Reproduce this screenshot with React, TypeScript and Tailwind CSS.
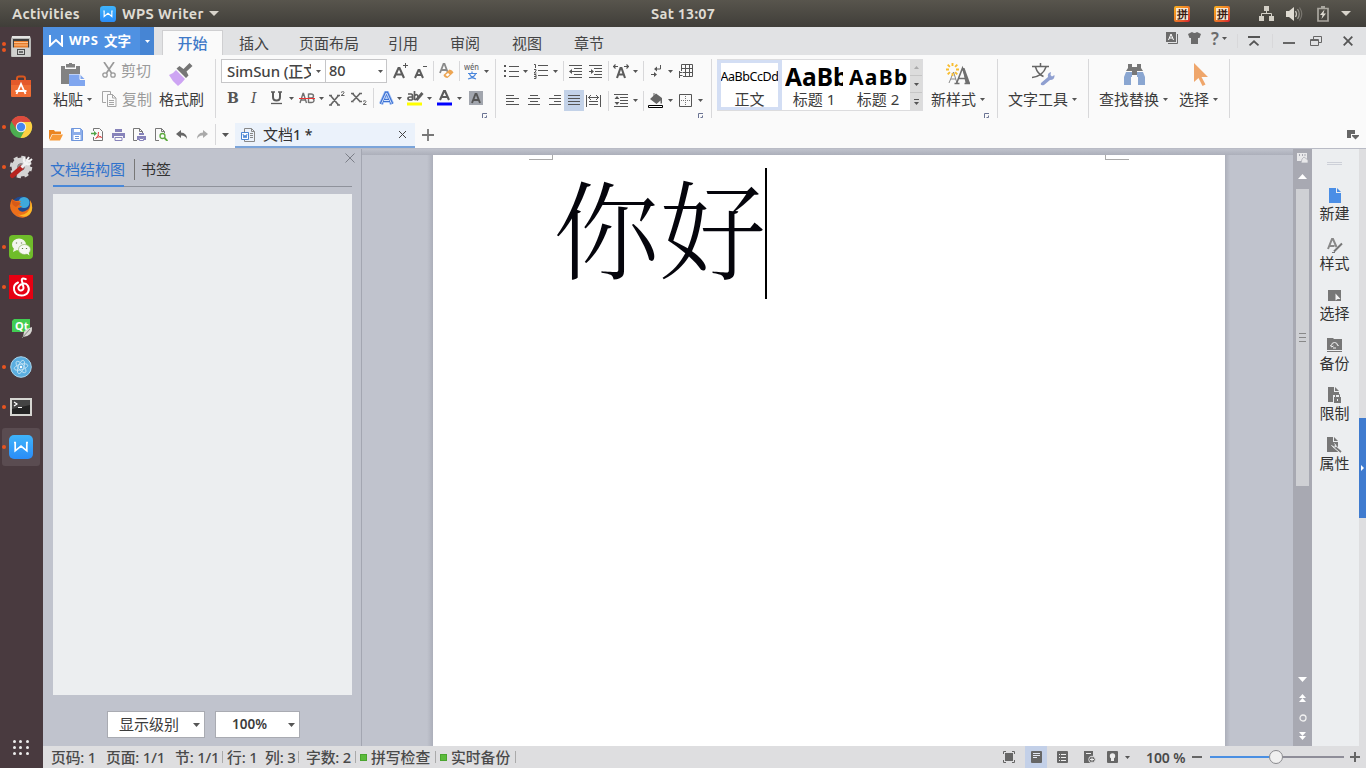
import React from "react";

type IcProps = { c?: string; w: number; h: number; children: React.ReactNode };

function Ic({ c = "", w, h, children }: IcProps) {
  return (
    <svg className={`block shrink-0 ${c}`} width={w} height={h} viewBox={`0 0 ${w} ${h}`} fill="none">
      {children}
    </svg>
  );
}

function Arrow({ c = "", color = "#555" }: { c?: string; color?: string }) {
  return (
    <Ic c={c} w={5} h={3}>
      <path d="M0 0h5L2.500 3z" fill={color} />
    </Ic>
  );
}

function Sep({ c = "" }: { c?: string }) {
  return <div className={`w-px shrink-0 bg-[#d8d8da] ${c}`} />;
}

function Launcher({ c = "" }: { c?: string }) {
  return (
    <Ic c={c} w={5} h={5}>
      <path d="M.5 5V.5H5" stroke="#6a7393" />
      <path d="M2.500 4.500h2v-2" stroke="#6a7393" />
    </Ic>
  );
}

function Lines({ c = "", w, rows }: { c?: string; w: number; rows: [number, number][] }) {
  return (
    <Ic c={c} w={w} h={rows.length * 3 - 1}>
      {rows.map(([x, len], i) => (
        <path key={i} d={`M${x} ${i * 3 + 0.5}h${len}`} stroke="#555" />
      ))}
    </Ic>
  );
}

/* ---------- top panel ---------- */

function WpsLogo({ s }: { s: number }) {
  return (
    <svg className="block shrink-0" width={s} height={s} viewBox="0 0 24 24" fill="none">
      <defs>
        <linearGradient id="wpsg" x1="0" y1="0" x2="0" y2="1">
          <stop offset="0" stopColor="#3fb4fb" />
          <stop offset="1" stopColor="#2a8cf7" />
        </linearGradient>
      </defs>
      <rect width="24" height="24" rx="5" fill="url(#wpsg)" />
      <path d="M5 7.500h1.200v8.300L12 11l5.800 4.800V7.500H19" stroke="#fff" strokeWidth="1.700" />
    </svg>
  );
}

function PinIcon({ c }: { c: string }) {
  return (
    <div
      className={`flex h-[16px] w-[16px] shrink-0 items-center justify-center rounded-[2px] bg-linear-to-br from-[#f6b01f] via-[#ee7a25] to-[#d3122e] ${c}`}
    >
      <div className="flex h-[12px] w-[12px] items-center justify-center bg-[#f7e7d2] text-[11px] leading-[12px] font-bold text-[#35180f]">
        拼
      </div>
    </div>
  );
}

function TopBar() {
  return (
    <div className="flex h-[27px] shrink-0 items-center bg-linear-to-b from-[#58554d] to-[#403e39] font-['Ubuntu','Open_Sans','Noto_Sans',sans-serif] text-[14.500px] font-semibold text-[#dfdbd2]">
      <div className="ml-[12px] w-[88px] tracking-[0.35px] whitespace-nowrap">Activities</div>
      <WpsLogo s={16} />
      <div className="ml-[6px] w-[87px] tracking-[0.35px] whitespace-nowrap">WPS Writer</div>
      <Ic w={10} h={5}>
        <path d="M0 0h10L5 5z" fill="#d8d4cb" />
      </Ic>
      <div className="ml-[432px] w-[523px] tracking-[0.2px] whitespace-nowrap">Sat 13:07</div>
      <PinIcon c="" />
      <PinIcon c="ml-[24px]" />
      <Ic c="ml-[29px]" w={16} h={15}>
        <path d="M5 0h5v5H5zM0 10h5v5H0zM10 10h5v5h-5z" fill="#d3cfc6" />
        <path d="M7.500 5v2.500M2.500 10V7.500h10V10" stroke="#d3cfc6" />
      </Ic>
      <Ic c="ml-[11px]" w={17} h={14}>
        <path d="M0 4h3l5-4v14l-5-4H0z" fill="#dfdbd2" />
        <path d="M9.500 4q2 3 0 6" stroke="#c9c5bd" strokeWidth="1.300" />
        <path d="M11.500 2q3.500 5 0 10" stroke="#96928a" strokeWidth="1.300" />
        <path d="M13.500.5q4.500 6.500 0 13" stroke="#79766f" strokeWidth="1.200" />
      </Ic>
      <Ic c="ml-[14px]" w={12} h={16}>
        <path d="M1 2.500h10v12.500H1z" stroke="#aaa79f" strokeWidth="1.700" />
        <path d="M4 0h4v2H4z" fill="#aaa79f" />
        <path d="M7.500 3.500 3 9h2.500l-1 4L9 7.500H6.500z" fill="#dfdbd2" />
      </Ic>
      <Ic c="ml-[12px]" w={10} h={5}>
        <path d="M0 0h10L5 5z" fill="#d8d4cb" />
      </Ic>
    </div>
  );
}

/* ---------- launcher dock ---------- */

function DockItem({ dots = 0, active = false, children }: { dots?: number; active?: boolean; children: React.ReactNode }) {
  return (
    <div className="flex h-[40px] w-[43px] items-center">
      <div className={`ml-[2px] flex h-[38px] w-[38px] items-center rounded-[3px] ${active ? "bg-[#5a4c51]" : ""}`}>
        <div className="flex w-[7px] shrink-0 flex-col gap-[2px]">
          {Array.from({ length: dots }, (_, i) => (
            <div key={i} className="h-[4px] w-[4px] rounded-full bg-[#e95420]" />
          ))}
        </div>
        {children}
      </div>
    </div>
  );
}

function Dock() {
  return (
    <div className="flex w-[43px] shrink-0 flex-col bg-[#493a3f]">
      <DockItem dots={2}>
        <Ic w={24} h={24}>
          <path d="M3 1h18l1 3v17q0 1-1 1H3q-1 0-1-1V4z" fill="#b9b9b7" />
          <path d="M3 1h18v2H3z" fill="#e4e4e2" />
          <path d="M4 4h16v9H4z" fill="#3f3f3f" />
          <path d="M5 6h14v7H5z" fill="#e57c2b" />
          <path d="M5 7.500h14M5 10h14" stroke="#ffc08a" />
          <path d="M3 12.500h18v9H3z" fill="#d0d0ce" />
          <rect x="8.500" y="14.500" width="7" height="5" stroke="#4c4c4c" />
          <path d="M10 17h4" stroke="#4c4c4c" strokeWidth="1.500" />
        </Ic>
      </DockItem>
      <DockItem>
        <Ic w={24} h={24}>
          <path d="M8 6V3.500q0-2 2-2h4q2 0 2 2V6" stroke="#d9571f" strokeWidth="2" />
          <path d="M2 5h20v16q0 1-1 1H3q-1 0-1-1z" fill="#ef6c33" />
          <path d="M2 5h20v5H2z" fill="#e4592a" />
          <path d="m7.500 19 4.500-10 4.500 10M6.500 16h11" stroke="#fff" strokeWidth="1.800" />
        </Ic>
      </DockItem>
      <DockItem dots={1}>
        <Ic w={24} h={24}>
          <circle cx="12" cy="12" r="11" fill="#4cae50" />
          <path d="M12 12 2.500 6.500A11 11 0 0 1 21.500 6.500z" fill="#dd4b3e" />
          <path d="M2.500 6.500 7.500 14.500 12 7h9.700A11 11 0 0 0 2.500 6.500z" fill="#dd4b3e" />
          <path d="M12 7h9.900A11 11 0 0 1 11.500 23L16.500 14z" fill="#fdd043" />
          <circle cx="12" cy="12" r="5.200" fill="#f4f4f4" />
          <circle cx="12" cy="12" r="4.200" fill="#4686f0" />
        </Ic>
      </DockItem>
      <DockItem dots={1}>
        <Ic w={24} h={24}>
          <circle cx="12" cy="12" r="6.500" stroke="#d4d4d4" strokeWidth="6" />
          <circle cx="12" cy="12" r="10" stroke="#d4d4d4" strokeWidth="2.500" strokeDasharray="4.200 3.650" />
          <circle cx="12" cy="12" r="3.500" fill="#8b8587" />
          <path d="M3.500 20.500 12 13" stroke="#b82420" strokeWidth="5" strokeLinecap="round" />
          <path d="m12.500 12.500 6-6" stroke="#f0f0f0" strokeWidth="3" />
          <path d="M16 2.500q-2.500 3 0 5.500t6 .5M20 2l-2 3 2 1.500 3-2.500" stroke="#f4f4f4" strokeWidth="2" />
        </Ic>
      </DockItem>
      <DockItem>
        <Ic w={24} h={24}>
          <circle cx="12.500" cy="12" r="10.500" fill="#214a91" />
          <circle cx="15" cy="7.500" r="5.500" fill="#3fa9dc" />
          <path d="M3 4q-4 7 0 13 4 6 11 5.700 8-.7 9-9.700.5-5-2-8 1 8-3 10-4 3-7 1-2-1-2-3 3 0 4-2-3 0-3-2 1-2 2-3-3-.5-5 0-2-.5-4-2z" fill="#ec6f1a" />
          <path d="M21 5.500q1.500 8-3 12-4 3.500-9 2 7 4.500 12-.5 4.500-6 0-13.500z" fill="#fbb827" />
          <path d="m3 5 4 2q4 0 5 2-3 1-5 3-5-2-4-7z" fill="#d75a18" />
        </Ic>
      </DockItem>
      <DockItem dots={1}>
        <Ic w={24} h={24}>
          <rect width="24" height="24" rx="4" fill="#6fbc2a" />
          <ellipse cx="10" cy="9.500" rx="7" ry="6" fill="#f2f5ec" />
          <path d="m5 13-1 4 4-2z" fill="#f2f5ec" />
          <ellipse cx="15.500" cy="14.500" rx="6" ry="5" fill="#f7f9f3" stroke="#8fb269" strokeWidth=".7" />
          <path d="m17 18 3.500 2.500-1-3.500z" fill="#f7f9f3" />
          <path d="M7.500 7.500v1M12.500 7.500v1M13.500 13v1M17.500 13v1" stroke="#627b45" strokeWidth="1.200" />
        </Ic>
      </DockItem>
      <DockItem dots={1}>
        <Ic w={24} h={24}>
          <path d="M0 0h24v24H0z" fill="#e60012" />
          <path
            d="M16.800 4.200Q13 2.500 12.700 5l1.800 7.500a2.600 2.600 0 1 1-4.600-1.200C11.500 8.300 16.500 7.500 18.700 10.500c2.800 4.500 0 10-6.200 10-8.500 0-10-10-3.500-13"
            stroke="#fff"
            strokeWidth="2"
            strokeLinecap="round"
          />
        </Ic>
      </DockItem>
      <DockItem>
        <Ic w={24} h={24}>
          <path d="M5 4h16v13H3V6z" fill="#41cd52" />
          <text x="6" y="15" fontSize="11" fontWeight="700" fill="#fff" fontFamily="Noto Sans">
            Qt
          </text>
          <path d="M23 12q1 9-9 10 0-8 9-10z" fill="#d8d8d4" />
          <path d="m21 14-8 9" stroke="#8b8b87" />
        </Ic>
      </DockItem>
      <DockItem dots={1}>
        <Ic w={24} h={24}>
          <circle cx="12" cy="12" r="10.300" fill="#5aaee0" stroke="#a9d6ee" />
          <ellipse cx="12" cy="12" rx="7" ry="2.800" stroke="#c2e2f3" strokeWidth=".9" transform="rotate(-15 12 12)" />
          <ellipse cx="12" cy="12" rx="7" ry="2.800" stroke="#c2e2f3" strokeWidth=".9" transform="rotate(50 12 12)" />
          <ellipse cx="12" cy="12" rx="7" ry="2.800" stroke="#c2e2f3" strokeWidth=".9" transform="rotate(110 12 12)" />
          <circle cx="12" cy="12" r="1.200" fill="#fff" />
        </Ic>
      </DockItem>
      <DockItem dots={1}>
        <Ic w={24} h={24}>
          <path d="M1 3h22v18H1z" fill="#d6d6d2" />
          <path d="M3 5h18v14H3z" fill="#242424" />
          <path d="M3 5h18v5L3 14z" fill="#444" />
          <path d="m5 7 3 2-3 2M9 12.500h4" stroke="#fff" strokeWidth="1.200" />
        </Ic>
      </DockItem>
      <DockItem dots={1} active>
        <WpsLogo s={24} />
      </DockItem>
      <div className="mt-[273px] ml-[13px] grid w-[16px] grid-cols-3 gap-[3px]">
        {Array.from({ length: 9 }, (_, i) => (
          <div key={i} className="h-[3px] w-[3px] rounded-full bg-[#eee]" />
        ))}
      </div>
    </div>
  );
}

/* ---------- ribbon tabs ---------- */

function TabRow() {
  return (
    <div className="flex h-[28px] shrink-0 items-stretch bg-[#e1e2e4] text-[15px] text-[#444]">
      <div className="flex w-[97px] shrink-0 items-center bg-[#4f91e2] text-white">
        <Ic c="ml-[6px]" w={14} h={12}>
          <path d="M1 0v10.500L7 5l6 5.500V0" stroke="#fff" strokeWidth="2" />
        </Ic>
        <span className="ml-[6px] w-[35px] text-[13px] font-bold tracking-[0.5px]">WPS</span>
        <span className="text-[13.500px] font-bold">文字</span>
      </div>
      <div className="flex w-[14px] shrink-0 items-center justify-center bg-[#4685d4]">
        <Arrow color="#fff" />
      </div>
      <div className="mt-[3px] ml-[8px] flex w-[61px] shrink-0 items-center justify-center border border-b-0 border-[#cfcfd1] bg-[#fafafa] font-medium text-[#3f79c8]">
        开始
      </div>
      <div className="ml-[16px] flex items-center pt-[4px]">
        <span className="w-[60px]">插入</span>
        <span className="w-[89px]">页面布局</span>
        <span className="w-[62px]">引用</span>
        <span className="w-[62px]">审阅</span>
        <span className="w-[62px]">视图</span>
        <span className="w-[62px]">章节</span>
      </div>
      <div className="ml-auto flex items-center pr-[13px]">
        <Ic c="mb-[6px]" w={12} h={12}>
          <path d="M0 0h10v10H0z" fill="#6b6b6b" />
          <path d="M11.500 2v9.500H2" stroke="#6b6b6b" />
          <path d="m2.500 8 2.500-6 2.500 6M3.500 6h3" stroke="#fff" />
        </Ic>
        <Ic c="mb-[6px] ml-[10px]" w={13} h={12}>
          <path d="M0 2 4 0q2.500 2 5 0l4 2-1.500 4H10v6H3V6H1.500z" fill="#6b6b6b" />
        </Ic>
        <span className="mb-[6px] ml-[10px] w-[10px] text-[17px] leading-none font-semibold text-[#6b6b6b]">?</span>
        <Arrow c="mb-[6px] ml-px" />
        <Sep c="ml-[10px] h-[14px] bg-[#a9a9ab]" />
        <Ic c="ml-[10px]" w={12} h={10}>
          <path d="M0 1h12" stroke="#555" strokeWidth="2" />
          <path d="m1.500 9.300 4.500-4 4.500 4" stroke="#555" strokeWidth="1.800" />
        </Ic>
        <Sep c="ml-[12px] h-[14px] bg-[#a9a9ab]" />
        <div className="mt-[3px] ml-[10px] h-[2px] w-[12px] bg-[#666]" />
        <Ic c="ml-[15px]" w={12} h={10}>
          <path d="M3.500 3V.5h8v6H9" stroke="#666" />
          <path d="M.5 3.500h8v6h-8zM.5 4.500h8" stroke="#666" />
        </Ic>
        <Ic c="ml-[21px]" w={10} h={10}>
          <path d="m.7.7 8.600 8.600M9.300.7.700 9.300" stroke="#555" strokeWidth="1.800" />
        </Ic>
      </div>
    </div>
  );
}

/* ---------- ribbon groups ---------- */

function ClipboardGroup() {
  return (
    <div className="flex w-[172px] shrink-0 text-[15px] text-[#3c3c3c]">
      <div className="ml-[10px] flex w-[49px] flex-col">
        <Ic c="mt-[8px] ml-[8px]" w={24} h={24}>
          <path d="M0 3h5V1h3V0h3v1h3v2h5v8H8v10H0z" fill="#828282" />
          <path d="M4 3h11v3H4z" fill="#fafafa" />
          <path d="M5 1h9v3.500H5z" fill="#828282" />
          <path d="M8 11.500h11l5 5V23H8z" fill="#80a6ef" />
          <path d="M19 11.500v5h5" stroke="#fafafa" />
        </Ic>
        <div className="mt-px flex h-[22px] items-center whitespace-nowrap">
          <span className="w-[34px]">粘贴</span>
          <Arrow />
        </div>
      </div>
      <div className="flex w-[57px] flex-col text-[#9a9a9a]">
        <div className="mt-[4px] flex h-[22px] items-center">
          <Ic w={14} h={16}>
            <path d="m2 0 7.500 11M12 0 4.500 11" stroke="#999" strokeWidth="1.700" />
            <circle cx="3" cy="13" r="2.200" stroke="#999" strokeWidth="1.300" />
            <circle cx="11" cy="13" r="2.200" stroke="#999" strokeWidth="1.300" />
          </Ic>
          <span className="ml-[5px] whitespace-nowrap">剪切</span>
        </div>
        <div className="mt-[7px] flex h-[22px] items-center">
          <Ic w={15} h={16}>
            <path d="M4 11.500H.5V.5h8V3" stroke="#a5a5a5" />
            <path d="M5.500 3.500h5l3.500 3.500v8.500H5.500zM10.500 3.500V7H14M7 9.500h5M7 11.500h5M7 13.500h5" stroke="#a5a5a5" />
          </Ic>
          <span className="ml-[5px] whitespace-nowrap">复制</span>
        </div>
      </div>
      <div className="flex flex-col">
        <Ic c="mt-[8px] ml-[10px]" w={24} h={24}>
          <path d="M0 12q5-2 7-5l9 9q-3 4-7 7-6-5-9-11z" fill="#cda4f3" />
          <path d="m7.500 5.500 9.500 9.500 2.500-2.500-2-4L23.500 3 20.500 0l-6 6-4-3z" fill="#757575" />
        </Ic>
        <div className="mt-px flex h-[22px] items-center whitespace-nowrap">格式刷</div>
      </div>
    </div>
  );
}

function FontGroup() {
  return (
    <div className="flex w-[279px] shrink-0 flex-col text-[#555]">
      <div className="mt-[4px] flex h-[24px] items-center">
        <div className="ml-[5px] flex h-[24px] w-[105px] shrink-0 items-center border border-[#c6c6c8] bg-white text-[15px] font-medium text-[#444]">
          <span className="ml-[5px] w-[84px] overflow-hidden tracking-[-0.1px] whitespace-nowrap">SimSun (正文</span>
          <Arrow c="ml-[5px]" />
        </div>
        <div className="flex h-[24px] w-[61px] shrink-0 items-center border border-l-0 border-[#c6c6c8] bg-white text-[14.500px] font-medium text-[#444]">
          <span className="ml-[3px] w-[49px]">80</span>
          <Arrow />
        </div>
        <Ic c="ml-[6px]" w={15} h={16}>
          <path d="m1 15 4.500-10h1L11 15M3 11.500h6" stroke="#5c5c5c" strokeWidth="2.100" />
          <path d="M12.500 0v5M10 2.500h5" stroke="#555" />
        </Ic>
        <Ic c="ml-[6px]" w={13} h={16}>
          <path d="m1 15 3.500-8h1L9 15M2.500 12h5" stroke="#5c5c5c" strokeWidth="2" />
          <path d="M9 3.500h4" stroke="#555" />
        </Ic>
        <Sep c="ml-[6px] h-[20px]" />
        <Ic c="ml-[5px]" w={15} h={16}>
          <path d="M1 10 4.500 1h1L9 10M2.500 7h6" stroke="#8a8a8a" strokeWidth="1.800" />
          <path d="m4.500 12 6-5.500q3 .5 4 3L8.500 15Q5 14.500 4.500 12z" fill="#eda552" />
          <path d="m6.500 12 2 1.500L10.700 11.500 9 10z" fill="#fff" />
        </Ic>
        <Sep c="ml-[5px] h-[20px]" />
        <Ic c="ml-[4px]" w={17} h={17}>
          <text x="0" y="7" fontSize="9" fontWeight="500" fill="#666" fontFamily="Noto Sans" textLength="15" lengthAdjust="spacingAndGlyphs">
            wén
          </text>
          <path d="M4 10.500h9M8 8.500v2M5.500 11q1.500 3.500 6.500 5M11.500 11Q10 14.500 4 16" stroke="#4a86dc" strokeWidth="1.200" />
        </Ic>
        <Arrow c="ml-[3px]" />
      </div>
      <div className="mt-[4px] flex h-[22px] items-center">
        <span className="ml-[11px] w-[24px] font-['DejaVu_Serif',serif] text-[14px] font-bold tracking-tight">B</span>
        <span className="w-[19px] font-['DejaVu_Serif',serif] text-[14px] italic">I</span>
        <Ic w={13} h={14}>
          <path d="M1 1h4M8 1h4" stroke="#5c5c5c" strokeWidth="1.300" />
          <path d="M3 1v5q0 3.500 3.500 3.500T10 6V1" stroke="#5c5c5c" strokeWidth="2" />
          <path d="M1 12.500h11" stroke="#5c5c5c" strokeWidth="1.300" />
        </Ic>
        <Arrow c="ml-[6px]" />
        <Ic c="ml-[5px]" w={16} h={12}>
          <path d="m1 11 3-9.500h.5L7.500 11M2 8h4.500M9.500 1.500V11M9.500 2h2.500q2.500 0 2.500 2t-2.500 2h-2.500M12 6q3 0 3 2.300t-3 2.200H9.500" stroke="#707070" strokeWidth="1.400" />
          <path d="M0 6.500h16" stroke="#e33" />
        </Ic>
        <Arrow c="ml-[4px]" />
        <Ic c="ml-[5px]" w={16} h={15}>
          <path d="m1.500 4.500 8 9.500M9.500 4.500l-8 9.500M0 4.500h3M8 4.500h3M0 14h3M8 14h3" stroke="#666" strokeWidth="1.700" />
          <path d="M12 1.500q3-2 3 .2 0 1-3 2.800h3.500" stroke="#666" />
        </Ic>
        <Ic c="ml-[6px]" w={16} h={15}>
          <path d="m1.500 2.500 7.500 8M9 2.500l-7.500 8M0 2.500h3M8 2.500h3M0 10.500h3M8 10.500h3" stroke="#666" strokeWidth="1.700" />
          <path d="M12 10.300q3-1.500 3 .3 0 1-3 2.900h3.500" stroke="#666" />
        </Ic>
        <Sep c="ml-[6px] h-[20px]" />
        <Ic c="ml-[5px]" w={15} h={15}>
          <path d="m2 13 5-11h1l5 11M4 9.500h7" stroke="#a8c6f7" strokeWidth="4.500" />
          <path d="m2 13 5-11h1l5 11M4 9.500h7" stroke="#3f73d4" strokeWidth="2.900" />
          <path d="m2.500 12.500 4.800-10.500h.4l4.800 10.500M5 9.500h5" stroke="#e8f0ff" strokeWidth=".9" />
        </Ic>
        <Arrow c="ml-[3px]" />
        <Ic c="ml-[5px]" w={17} h={16}>
          <path d="M1 4h3q1.500 0 1.500 2v4M5.500 7H3q-2 0-2 1.500T3 10h2.500M7.500 1v9M7.500 5.500q3-2 3.500 1t-3.500 3.200" stroke="#5c5c5c" strokeWidth="1.700" />
          <path d="m9.500 10 6-7" stroke="#5c5c5c" strokeWidth="2.800" />
          <path d="M0 12.500h15v3H0z" fill="#ff0" />
        </Ic>
        <Arrow c="ml-[3px]" />
        <Ic c="ml-[5px]" w={15} h={16}>
          <path d="M3 10 7 1h1l4 9M4.500 7h6" stroke="#5c5c5c" strokeWidth="2.100" />
          <path d="M0 12.500h15v3H0z" fill="#00f" />
        </Ic>
        <Arrow c="ml-[5px]" />
        <Ic c="ml-[7px]" w={14} h={14}>
          <path d="M0 0h14v14H0z" fill="#a2a6ae" />
          <path d="m3 12 3.500-9h1L11 12M4 9h6" stroke="#555" strokeWidth="1.900" />
        </Ic>
      </div>
      <Launcher c="mt-[4px] ml-[266px]" />
    </div>
  );
}

function ParagraphGroup() {
  return (
    <div className="flex w-[215px] shrink-0 flex-col">
      <div className="mt-[6px] flex h-[20px] items-center">
        <Ic c="ml-[8px]" w={15} h={13}>
          <path d="M0 0h2v2H0zM0 5h2v2H0zM0 10h2v2H0z" fill="#555" />
          <path d="M5 1.500h10M5 6.500h10M5 11.500h10" stroke="#555" />
        </Ic>
        <Arrow c="ml-[4px]" />
        <Ic c="ml-[5px]" w={15} h={16}>
          <path d="M1 1.500h1.500V5M1 6.500h2v1.500l-2 2h2.500M1 11.500h2v4H1M1 13.500h2" stroke="#555" />
          <path d="M5 2.500h10M5 7.500h10M5 12.500h10" stroke="#555" />
        </Ic>
        <Arrow c="ml-[5px]" />
        <Sep c="ml-[5px] h-[20px]" />
        <Ic c="ml-[5px]" w={13} h={13}>
          <path d="M0 .5h13M5 3.500h8M5 6.500h8M5 9.500h8M0 12.500h13M1 6.500h4" stroke="#555" />
          <path d="M0 6.500 3 4v5z" fill="#555" />
        </Ic>
        <Ic c="ml-[7px]" w={13} h={13}>
          <path d="M0 .5h13M5 3.500h8M6 6.500h7M5 9.500h8M0 12.500h13M0 6.500h3" stroke="#555" />
          <path d="M5 6.500 2 4v5z" fill="#555" />
        </Ic>
        <Sep c="ml-[6px] h-[20px]" />
        <Ic c="ml-[4px]" w={16} h={15}>
          <path d="m4 14 3.500-10h1L12 14M5.500 10.500h5" stroke="#5c5c5c" strokeWidth="2.100" />
          <path d="M0 2.500h5M11 2.500h5M2.500.5l-2 2 2 2M13.500.5l2 2-2 2" stroke="#555" strokeWidth="1.200" />
        </Ic>
        <Arrow c="ml-[4px]" />
        <Sep c="ml-[5px] h-[20px]" />
        <Ic c="ml-[7px]" w={11} h={13}>
          <path d="M9.500 0v4H4M0 9.500h5" stroke="#555" />
          <path d="M3 4 6 1.500v5zM6 9.500 3 7v5z" fill="#555" />
        </Ic>
        <Arrow c="ml-[6px]" />
        <Ic c="ml-[6px]" w={14} h={14}>
          <path d="M2.500.5h11v12h-11zM2.500 4.500h11M2.500 8.500h11M6.500.5v12M10.500.5v12" stroke="#555" />
          <path d="M0 7h4v7H0z" fill="#fafafa" />
          <path d="M.5 7v7M.5 8.500h3M.5 11.500h3" stroke="#555" />
        </Ic>
      </div>
      <div className="mt-[9px] flex h-[21px] items-center">
        <Lines c="ml-[10px]" w={13} rows={[[0, 8], [0, 13], [0, 8], [0, 13]]} />
        <Lines c="ml-[9px]" w={12} rows={[[2, 8], [0, 12], [2, 8], [0, 12]]} />
        <Lines c="ml-[9px]" w={12} rows={[[5, 7], [0, 12], [5, 7], [0, 12]]} />
        <div className="ml-[3px] flex h-[21px] w-[20px] shrink-0 items-center justify-center bg-[#c3d2e8]">
          <Lines w={12} rows={[[0, 12], [0, 12], [0, 12], [0, 12]]} />
        </div>
        <Ic c="ml-[2px]" w={15} h={12}>
          <path d="M.5 0v12M14.500 0v12M3 6.500h9M3 9.500h9M2 2.500h11M5 0 2.500 2.500 5 5M10 0l2.500 2.500L10 5" stroke="#555" />
        </Ic>
        <Sep c="ml-[7px] h-[20px]" />
        <Ic c="ml-[5px]" w={14} h={13}>
          <path d="M0 .5h14M6 3.500h8M6 6.500h8M6 9.500h8M0 12.500h14" stroke="#555" />
          <path d="m3 2 2.500 3h-5zM3 11 .5 8h5z" fill="#555" />
        </Ic>
        <Arrow c="ml-[5px]" />
        <Sep c="ml-[5px] h-[20px]" />
        <Ic c="ml-[4px]" w={16} h={15}>
          <path d="m2 6 6-5.500L14 5v5.500h-1.500V7.500L8.500 11z" fill="#666" />
          <path d="M6 0v4" stroke="#666" />
          <path d="M.5 12.500h14v2H.5z" fill="#fff" stroke="#000" />
        </Ic>
        <Arrow c="ml-[4px]" />
        <Ic c="ml-[6px]" w={13} h={13}>
          <path d="M.5.5h12v12H.5z" stroke="#555" />
          <path d="M6.500 2v9M2 6.500h9" stroke="#777" strokeDasharray="1 1" />
        </Ic>
        <Arrow c="ml-[6px]" />
      </div>
      <Launcher c="mt-[2px] ml-[202px]" />
    </div>
  );
}

function StyleCell({ c, sample, label }: { c: string; sample: React.ReactNode; label: string }) {
  return (
    <div className={`flex h-[50px] shrink-0 flex-col items-center overflow-hidden bg-white ${c}`}>
      <div className="flex h-[28px] w-[58px] items-center justify-start overflow-hidden leading-[28px] whitespace-nowrap text-black">
        {sample}
      </div>
      <div className="h-[16px] leading-[16px]">{label}</div>
    </div>
  );
}

function StylesGroup() {
  return (
    <div className="flex w-[285px] shrink-0 text-[15px] text-[#3c3c3c]">
      <div className="mt-[4px] ml-[5px] flex h-[52px] border border-l-0 border-[#dcdcde]">
        <StyleCell
          c="w-[65px] border-4 border-y-[3px] border-[#d3def4]"
          sample={<span className="text-[12.500px] tracking-[-0.45px]">AaBbCcDd</span>}
          label="正文"
        />
        <StyleCell c="w-[64px] pt-[3px]" sample={<span className="text-[24.500px] font-bold">AaBb</span>} label="标题 1" />
        <StyleCell
          c="w-[64px] pt-[3px]"
          sample={<span className="text-[21px] font-bold tracking-[1.300px]">AaBb</span>}
          label="标题 2"
        />
        <div className="flex w-[12px] shrink-0 flex-col gap-px bg-[#c6c6c6]">
          <div className="flex h-[15px] items-center justify-center bg-[#dcdcdc]">
            <Ic w={5} h={3}>
              <path d="M0 3h5L2.500 0z" fill="#aaa" />
            </Ic>
          </div>
          <div className="flex h-[16px] items-center justify-center bg-[#dcdcdc]">
            <Arrow />
          </div>
          <div className="flex flex-1 flex-col items-center justify-center gap-[2px] bg-[#dcdcdc]">
            <div className="h-px w-[5px] bg-[#555]" />
            <Arrow />
          </div>
        </div>
      </div>
      <div className="ml-[8px] flex flex-col">
        <Ic c="mt-[8px] ml-[15px]" w={24} h={22}>
          <path d="m3 20 4.500-11L11 20M5 16h5" stroke="#8b8b8b" />
          <path d="m10.500 20.500 6-15.500 5.500 15.500M13 15.500h7M8.500 20.500h5M18.500 20.500H24" stroke="#6f6f6f" strokeWidth="1.600" />
          <path d="M16.500 5h2l5.500 15h-4.500z" fill="#6f6f6f" />
          <path
            d="M6.500 0v3M6.500 10v3M0 6.500h3M10 6.500h3M1.700 1.700l2.200 2.200M9.100 9.100l2.200 2.200M1.700 11.300l2.200-2.200M9.100 3.900l2.200-2.200"
            stroke="#f8bd30"
            strokeWidth="1.900"
          />
        </Ic>
        <div className="mt-[3px] flex h-[22px] items-center whitespace-nowrap">
          <span className="w-[49px]">新样式</span>
          <Arrow />
        </div>
        <Launcher c="mt-[3px] ml-[53px]" />
      </div>
    </div>
  );
}

function BigButton({ c, icon, label, gap }: { c: string; icon: React.ReactNode; label: string; gap: string }) {
  return (
    <div className={`flex shrink-0 flex-col text-[15px] text-[#3c3c3c] ${c}`}>
      <div className="mt-[8px] flex h-[24px]">{icon}</div>
      <div className="mt-px flex h-[22px] items-center whitespace-nowrap">
        <span className={gap}>{label}</span>
        <Arrow />
      </div>
    </div>
  );
}

function Ribbon() {
  return (
    <div className="flex h-[66px] shrink-0 bg-[#fafafa]">
      <ClipboardGroup />
      <Sep c="mt-[4px] h-[59px]" />
      <FontGroup />
      <Sep c="mt-[4px] h-[59px]" />
      <ParagraphGroup />
      <Sep c="mt-[4px] h-[59px]" />
      <StylesGroup />
      <Sep c="mt-[4px] h-[59px]" />
      <BigButton
        c="ml-[10px] w-[80px]"
        gap="w-[64px]"
        label="文字工具"
        icon={
          <Ic c="ml-[24px]" w={23} h={23}>
            <path d="M0 3.500h17M8.500 0v3.500M3.500 4q2 7 8 9.500M14 4Q11 13 0 14.500" stroke="#666" strokeWidth="1.500" />
            <path d="m9 20 7-6q-1-4 3-5l-.5 3 1.500 1.500L22.500 12q.5 5-4.500 5l-6 5q-4 1-3-2z" fill="#8f9fd0" />
          </Ic>
        }
      />
      <Sep c="mt-[4px] h-[59px]" />
      <BigButton
        c="ml-[10px] w-[80px]"
        gap="w-[64px]"
        label="查找替换"
        icon={
          <Ic c="ml-[25px]" w={21} h={22}>
            <path d="M4 1h4v3h5V1h4v4l2 3H13v4H8V8H2l2-3z" fill="#777" />
            <path d="M2 9h6v5H7v8H0v-8zM13 9h6l2 5v8h-7v-8h-1z" fill="#8aa6d1" />
          </Ic>
        }
      />
      <BigButton
        c="w-[50px]"
        gap="w-[34px]"
        label="选择"
        icon={
          <Ic c="ml-[15px]" w={15} h={23}>
            <path d="M0 0v19l4.500-4 4 8 3-1.500-4-7.500H14z" fill="#efa66b" />
          </Ic>
        }
      />
      <Sep c="mt-[4px] h-[59px]" />
    </div>
  );
}

/* ---------- quick access bar with document tabs ---------- */

function QuickBar() {
  return (
    <div className="flex h-[28px] shrink-0 items-center border-b border-[#b9bbc5] bg-[#fafafa]">
      <Ic c="ml-[6px]" w={14} h={12}>
        <path d="M0 11V1h5l1 1.500h6V5H3z" fill="#ea8420" />
        <path d="M3.500 5.500H14L11 11.500H.5z" fill="#f79a38" />
      </Ic>
      <Ic c="ml-[8px]" w={12} h={13}>
        <path d="M.5.5h9l2 2v10H.5z" stroke="#6f96dc" fill="#8daeea" />
        <path d="M3 1h6v3H3zM2.500 7h7v5h-7z" fill="#fff" />
        <path d="M4 8.500h4M4 10.500h4" stroke="#6f96dc" />
      </Ic>
      <Ic c="ml-[8px]" w={12} h={13}>
        <path d="M2.500 3V.5h6l3 3v9h-9V9" stroke="#777" />
        <path d="M0 5.500h4" stroke="#52a447" strokeWidth="1.500" />
        <path d="m3 3 3 2.500L3 8z" fill="#52a447" />
        <path d="M7.500 4q.5 4-3 7M7 7q1 2 4 2.500M5 9.500l5-1" stroke="#e04848" />
      </Ic>
      <Ic c="ml-[9px]" w={13} h={12}>
        <path d="M3 0h7v3H3zM0 4h13v5h-2V7H2v2H0z" fill="#8783ba" />
        <path d="M3 8.500h7v3H3z" stroke="#8783ba" />
      </Ic>
      <Ic c="ml-[8px]" w={14} h={13}>
        <path d="M4 12.500H.5V.5h6l3 3V5M6.500.5v3h3" stroke="#777" />
        <path d="M6 5h5v2H6zM4 8h9v4h-2v-2H6v2H4z" fill="#8783ba" />
        <path d="M6.500 10.500h4v2h-4z" stroke="#8783ba" />
      </Ic>
      <Ic c="ml-[8px]" w={13} h={13}>
        <path d="M4 12.500H.5V.5h6l3 3V5M6.500.5v3h3" stroke="#777" />
        <circle cx="7.500" cy="8" r="2.500" stroke="#5daa3f" strokeWidth="1.300" />
        <path d="m9.500 10 3 3" stroke="#5daa3f" strokeWidth="1.800" />
      </Ic>
      <Ic c="ml-[8px]" w={12} h={9}>
        <path d="M5 0 0 4l5 4V5.500q4-.5 6 3.500 0-6-6-6.500z" fill="#666" />
      </Ic>
      <Ic c="ml-[8px]" w={12} h={9}>
        <path d="m7 0 5 4-5 4V5.500Q3 5 1 9q0-6 6-6.500z" fill="#aaa" />
      </Ic>
      <Sep c="ml-[7px] h-[21px]" />
      <Ic c="ml-[6px]" w={7} h={4}>
        <path d="M0 0h7L3.500 4z" fill="#555" />
      </Ic>
      <div className="mt-[2px] ml-[6px] flex h-[25px] w-[180px] shrink-0 items-center border-b-2 border-[#7aa4da] bg-[#ebf2fb] text-[15px] text-[#333]">
        <Ic c="ml-[6px]" w={14} h={14}>
          <path d="M3.500 4V.5h7l3 3v10h-10v-2M10.500.5v3h3M9 5.500h3M9 7.500h3M9 9.500h3" stroke="#888" />
          <path d="M.5 4.500h7v7h-7z" fill="#fff" stroke="#4a86d4" />
          <path d="m2 6 1 4 1-3 1 3 1-4" stroke="#4a86d4" />
        </Ic>
        <span className="ml-[8px] w-[135px] whitespace-pre">
          文档<span className="text-[14px] font-medium">1 *</span>
        </span>
        <Ic w={9} h={9}>
          <path d="m1 1 7 7M8 1 1 8" stroke="#444" />
        </Ic>
      </div>
      <Ic c="ml-[7px]" w={12} h={12}>
        <path d="M6 0v12M0 6h12" stroke="#777" strokeWidth="1.800" />
      </Ic>
      <Ic c="mr-[7px] ml-auto" w={12} h={10}>
        <path d="M0 0h8v4H4v4H0z" fill="#666" />
        <path d="M5 5h7v1L8.500 9.500 5 6z" fill="#666" />
      </Ic>
    </div>
  );
}

/* ---------- workspace ---------- */

function Combo({ c, children }: { c: string; children: React.ReactNode }) {
  return (
    <div className={`flex h-[27px] items-center border border-[#a9abb2] bg-white text-[15px] text-[#3c3c3c] ${c}`}>
      {children}
      <Ic w={7} h={4}>
        <path d="M0 0h7L3.500 4z" fill="#555" />
      </Ic>
    </div>
  );
}

function OutlinePanel() {
  return (
    <div className="flex w-[319px] shrink-0 flex-col border-r border-[#a3a6b1] bg-[#c0c3cd]">
      <div className="flex h-[38px] text-[15px] text-[#333]">
        <div className="ml-[10px] flex w-[71px] shrink-0 items-center border-b-2 border-[#4a88d8] whitespace-nowrap text-[#2f72cc]">
          <span className="-ml-[3px] pt-[5px]">文档结构图</span>
        </div>
        <div className="flex w-[228px] items-center border-b border-[#8f929b] pt-[4px]">
          <div className="ml-[10px] h-[21px] w-px bg-[#777]" />
          <span className="ml-[6px]">书签</span>
          <Ic c="mt-[-23px] mr-[-3px] ml-auto" w={10} h={10}>
            <path d="m.5.5 9 9M9.500.5l-9 9" stroke="#7b7e87" />
          </Ic>
        </div>
      </div>
      <div className="mt-[7px] ml-[10px] h-[501px] w-[299px] bg-[#eceef0]" />
      <div className="mt-[16px] ml-[64px] flex gap-[10px]">
        <Combo c="w-[98px]">
          <span className="ml-[11px] w-[74px]">显示级别</span>
        </Combo>
        <Combo c="w-[85px]">
          <span className="ml-[16px] w-[56px] text-[13.500px] font-semibold">100%</span>
        </Combo>
      </div>
    </div>
  );
}

function Document() {
  return (
    <div className="flex flex-1 flex-col overflow-hidden bg-[#c0c3cd]">
      <div className="h-[6px] shrink-0 bg-linear-to-b from-[#bfc2cc] to-[#acafba]" />
      <div className="flex flex-1">
        <div className="w-[65px] shrink-0" />
        <div className="w-[6px] shrink-0 bg-linear-to-r from-[#c0c3cd] to-[#acafba]" />
        <div className="flex w-[792px] shrink-0 flex-col bg-white">
          <div className="flex justify-between pr-[96px] pl-[96px]">
            <div className="h-[5px] w-[24px] border-r border-b border-[#aaa]" />
            <div className="h-[5px] w-[24px] border-b border-l border-[#aaa]" />
          </div>
          <div className="mt-[8px] ml-[120px] flex h-[131px]">
            <div className="w-[212px] text-[106.500px] leading-[114px] font-light whitespace-nowrap text-[#05050c] font-['SimSun','Noto_Serif_CJK_SC','Noto_Sans_CJK_SC',serif]">
              你好
            </div>
            <div className="w-[2px] bg-black" />
          </div>
        </div>
        <div className="w-[5px] shrink-0 bg-linear-to-l from-[#c0c3cd] to-[#acafba]" />
      </div>
    </div>
  );
}

function ScrollBar() {
  return (
    <div className="flex w-[19px] shrink-0 flex-col items-center bg-[#a8a9b2]">
      <Ic c="mt-[4px]" w={11} h={10}>
        <path d="M0 0h10v8H0z" fill="#e8e8ea" />
        <path d="M2.500 1v2M5.500 1v2M8 1v2" stroke="#a8a9b2" />
        <path d="m4 10 1-4 2-2 4 3v3z" fill="#e8e8ea" stroke="#a8a9b2" strokeWidth=".7" />
      </Ic>
      <Ic c="mt-[11px]" w={9} h={5}>
        <path d="M0 5h9L4.500 0z" fill="#fff" />
      </Ic>
      <div className="mt-[10px] flex h-[297px] w-[13px] flex-col items-center justify-center gap-[3px] bg-[#cfd0d4]">
        <div className="h-px w-[7px] bg-[#888]" />
        <div className="h-px w-[7px] bg-[#888]" />
        <div className="h-px w-[7px] bg-[#888]" />
      </div>
      <Ic c="mt-[191px]" w={9} h={5}>
        <path d="M0 0h9L4.500 5z" fill="#fff" />
      </Ic>
      <Ic c="mt-[12px]" w={7} h={8}>
        <path d="M0 4h7L3.500 0zM0 8h7L3.500 4z" fill="#fff" />
      </Ic>
      <Ic c="mt-[12px]" w={8} h={8}>
        <circle cx="4" cy="4" r="3" stroke="#f2f2f2" strokeWidth="1.300" />
      </Ic>
      <Ic c="mt-[10px]" w={7} h={8}>
        <path d="M0 0h7L3.500 4zM0 4h7L3.500 8z" fill="#fff" />
      </Ic>
    </div>
  );
}

function SideItem({ icon, label }: { icon: React.ReactNode; label: string }) {
  return (
    <div className="flex h-[50px] flex-col items-center">
      <div className="flex h-[16px] items-center">{icon}</div>
      <div className="leading-[21px]">{label}</div>
    </div>
  );
}

function SideBar() {
  return (
    <div className="flex w-[47px] shrink-0 flex-col bg-[#eceef0] text-[15px] text-[#333]">
      <div className="mt-[13px] ml-[15px] h-[3px] w-[15px] border-y border-[#cdd0d8]" />
      <div className="mt-[22px] flex flex-col pr-[2px]">
        <SideItem
          label="新建"
          icon={
            <Ic w={12} h={15}>
              <path d="M0 0h7v5h5v10H0z" fill="#4a8ee6" />
              <path d="m8 0 4 4H8z" fill="#4a8ee6" />
            </Ic>
          }
        />
        <SideItem
          label="样式"
          icon={
            <Ic w={16} h={15}>
              <path d="m1 11 4-10h1l3.500 8M2.500 8h5" stroke="#888" strokeWidth="2" />
              <path d="m7 13.500 8-8" stroke="#777" strokeWidth="1.900" />
              <path d="M5 14.500h3" stroke="#777" />
            </Ic>
          }
        />
        <SideItem
          label="选择"
          icon={
            <Ic c="mt-[2px]" w={13} h={12}>
              <path d="M0 0h13v11H0z" fill="#777" />
              <path d="M7.500 3.500v7L9.500 9h3z" fill="#f4f4f4" />
            </Ic>
          }
        />
        <SideItem
          label="备份"
          icon={
            <Ic w={15} h={14}>
              <path d="M0 0h6l1 1h8v11H0zM0 13h15v1H0z" fill="#777" />
              <path d="M4.500 7.500a3 3 0 0 1 6 0M6 10h3M3.500 7l1 2 2-1M11.500 8l-1-1.500" stroke="#f4f4f4" />
            </Ic>
          }
        />
        <SideItem
          label="限制"
          icon={
            <Ic w={13} h={16}>
              <path d="M0 0h6v5h5v10H0z" fill="#777" />
              <path d="m7 0 4 4H7z" fill="#777" />
              <path d="M5 8h8v8H5z" fill="#eceef0" />
              <path d="M6 10h7v6H6z" fill="#777" />
              <path d="M7.500 10V7.500h4V10" stroke="#777" />
              <path d="M9.500 12v2" stroke="#eceef0" />
            </Ic>
          }
        />
        <SideItem
          label="属性"
          icon={
            <Ic w={15} h={16}>
              <path d="M0 0h6v5h5v10H0z" fill="#777" />
              <path d="m7 0 4 4H7z" fill="#777" />
              <path d="m7 9 7 6" stroke="#eceef0" strokeWidth="3.500" />
              <path d="m7 9 7 6" stroke="#777" strokeWidth="1.700" />
              <path d="M4.500 8q1 3 4 2 1-2-1-3.500" stroke="#eceef0" />
            </Ic>
          }
        />
      </div>
    </div>
  );
}

/* ---------- status bar ---------- */

function StatusBar() {
  return (
    <div className="flex h-[22px] shrink-0 items-center bg-[#dedee0] text-[14.800px] font-medium whitespace-nowrap text-[#4a4a4a]">
      <span className="ml-[8px] w-[55px] tracking-[-0.15px]">页码: 1</span>
      <span className="w-[69px] tracking-[-0.15px]">页面: 1/1</span>
      <span className="w-[47px] tracking-[-0.15px]">节: 1/1</span>
      <div className="h-[12px] w-px bg-[#aaa]" />
      <span className="ml-[4px] w-[38px] tracking-[-0.15px]">行: 1</span>
      <span className="w-[33px] tracking-[-0.15px]">列: 3</span>
      <div className="h-[12px] w-px bg-[#aaa]" />
      <span className="ml-[7px] w-[49px] tracking-[-0.15px]">字数: 2</span>
      <div className="h-[12px] w-px bg-[#aaa]" />
      <div className="ml-[4px] h-[7px] w-[7px] border border-[#4aa52f] bg-[#5cbb3c]" />
      <span className="ml-[4px] w-[64px]">拼写检查</span>
      <div className="h-[12px] w-px bg-[#aaa]" />
      <div className="ml-[4px] h-[7px] w-[7px] border border-[#4aa52f] bg-[#5cbb3c]" />
      <span className="ml-[4px] w-[64px]">实时备份</span>
      <div className="h-[12px] w-px bg-[#aaa]" />
      <div className="ml-auto flex h-[22px] items-center pr-[6px]">
        <Ic w={12} h={12}>
          <path d="M2 2h8v8H2z" fill="#666" />
          <path d="M.5 3V.5H3M9 .5h2.500V3M11.500 9v2.500H9M3 11.500H.5V9" stroke="#666" />
        </Ic>
        <div className="ml-[10px] flex h-[22px] w-[22px] items-center justify-center bg-[#c3d0e8]">
          <Ic w={11} h={12}>
            <rect width="11" height="12" rx="1" fill="#666" />
            <path d="M2 2.500h7M2 4.500h7M2 6.500h4" stroke="#e4e9f3" />
          </Ic>
        </div>
        <Ic c="ml-[10px]" w={11} h={12}>
          <rect width="11" height="12" rx="1" fill="#666" />
          <path d="M2 3.500h1M4 3.500h5M2 6.500h1M4 6.500h5M2 9.500h1M4 9.500h5" stroke="#eee" />
        </Ic>
        <Ic c="ml-[16px]" w={12} h={12}>
          <path d="M0 0h9v12H0z" fill="#666" />
          <path d="M2 2.500h5" stroke="#eee" />
          <circle cx="8" cy="8.500" r="3.300" fill="#666" stroke="#dedee0" />
          <path d="M8 6.500v4M6 8.500h4" stroke="#eee" />
        </Ic>
        <Ic c="ml-[11px]" w={11} h={12}>
          <rect width="11" height="12" rx="1" fill="#666" />
          <circle cx="5.500" cy="5" r="2.700" fill="#eee" />
          <path d="M4 7h3v3H4z" fill="#eee" />
        </Ic>
        <Arrow c="ml-[7px]" />
        <span className="ml-[16px] w-[46px] text-[14px] font-semibold tracking-[-0.1px]">100 %</span>
        <div className="h-[2px] w-[10px] bg-[#666]" />
        <div className="ml-[8px] flex h-[14px] w-[134px] items-center">
          <div className="h-[2px] w-[59px] bg-[#4a8fe2]" />
          <div className="h-[14px] w-[14px] shrink-0 rounded-full border border-[#8a8a8e] bg-[#f0f0f0]" />
          <div className="h-[2px] flex-1 bg-[#8e8d98]" />
        </div>
        <Ic c="ml-[6px]" w={10} h={10}>
          <path d="M5 0v10M0 5h10" stroke="#666" strokeWidth="2" />
        </Ic>
      </div>
    </div>
  );
}

export default function App() {
  return (
    <div className="flex h-[768px] w-[1366px] flex-col overflow-hidden font-['Noto_Sans','Noto_Sans_CJK_SC',sans-serif]">
      <TopBar />
      <div className="flex h-[741px]">
        <Dock />
        <div className="flex w-[1323px] shrink-0 flex-col">
          <TabRow />
          <Ribbon />
          <QuickBar />
          <div className="flex h-[597px] shrink-0">
            <OutlinePanel />
            <Document />
            <ScrollBar />
            <SideBar />
            <div className="flex w-[7px] shrink-0 flex-col bg-[#dedee0]">
              <div className="mt-[269px] flex h-[100px] items-center justify-center bg-[#3f7bcf]">
                <Ic w={3} h={6}>
                  <path d="M0 0v6l3-3z" fill="#fff" />
                </Ic>
              </div>
            </div>
          </div>
          <StatusBar />
        </div>
      </div>
    </div>
  );
}
